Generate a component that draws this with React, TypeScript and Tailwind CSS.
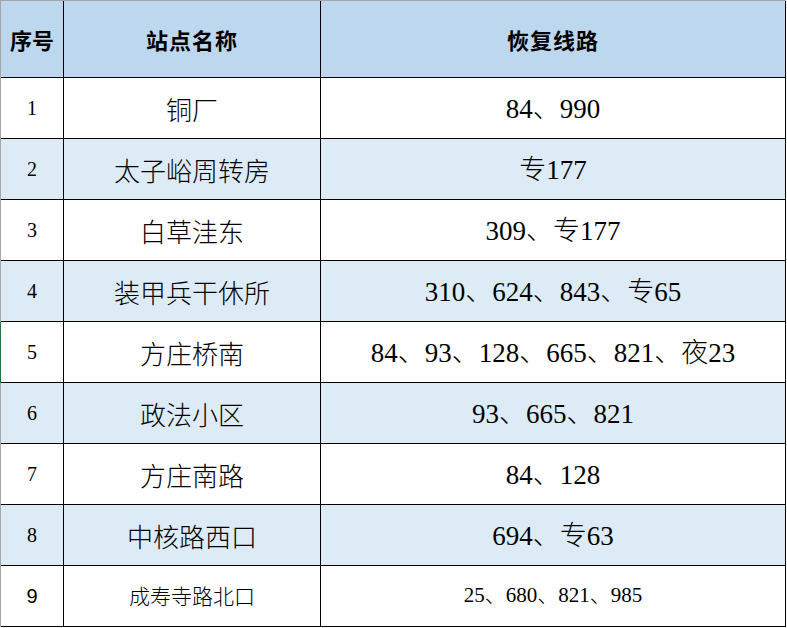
const rows = [
  { no: '1', name: '铜厂', routes: '84、990' },
  { no: '2', name: '太子峪周转房', routes: '专177' },
  { no: '3', name: '白草洼东', routes: '309、专177' },
  { no: '4', name: '装甲兵干休所', routes: '310、624、843、专65' },
  { no: '5', name: '方庄桥南', routes: '84、93、128、665、821、夜23' },
  { no: '6', name: '政法小区', routes: '93、665、821' },
  { no: '7', name: '方庄南路', routes: '84、128' },
  { no: '8', name: '中核路西口', routes: '694、专63' },
];

const serif = "font-['Liberation_Serif','Noto_Sans_CJK_SC',serif]";

export default function App() {
  return (
    <div className="w-[787px] h-[628px] bg-white text-black">
      <div className="w-[786px] border-t border-[#a6a6a6]">
        {/* header */}
        <div className="flex h-[77px] bg-[#bdd7ee] border-l border-[#a6a6a6] font-['Noto_Sans_CJK_SC',sans-serif] font-bold text-[22px]">
          <div className="w-[63px] border-r border-b border-black flex items-center justify-center">序号</div>
          <div className="w-[257px] border-r border-b border-black flex items-center justify-center tracking-[1px]">站点名称</div>
          <div className="w-[465px] border-r border-b border-black flex items-center justify-center tracking-[1px]">恢复线路</div>
        </div>

        {rows.map((r, i) => (
          <div
            key={r.no}
            className={`flex h-[61px] border-l ${i === 4 ? 'border-[#217346]' : 'border-[#a6a6a6]'} ${i % 2 === 1 ? 'bg-[#ddebf7]' : 'bg-white'}`}
          >
            <div className={`w-[63px] border-r border-b border-black flex items-center justify-center text-[20px] ${serif}`}>
              {r.no}
            </div>
            <div className="w-[257px] border-r border-b border-black flex items-center justify-center text-[26px] font-['Noto_Sans_CJK_SC',sans-serif] font-light">
              {r.name}
            </div>
            <div className={`w-[465px] border-r border-b border-black flex items-center justify-center text-[27px] font-light pt-[3px] ${serif}`}>
              {r.routes}
            </div>
          </div>
        ))}

        {/* last row, smaller text */}
        <div className="flex h-[61px] border-l border-[#a6a6a6] bg-white">
          <div className="w-[63px] border-r border-b border-black flex items-center justify-center text-[20px] font-['Liberation_Sans',sans-serif]">
            9
          </div>
          <div className="w-[257px] border-r border-b border-black flex items-center justify-center text-[21px] font-['Noto_Sans_CJK_SC',sans-serif] font-light">
            成寿寺路北口
          </div>
          <div className={`w-[465px] border-r border-b border-black flex items-center justify-center text-[21px] font-light ${serif}`}>
            25、680、821、985
          </div>
        </div>
      </div>
    </div>
  );
}
